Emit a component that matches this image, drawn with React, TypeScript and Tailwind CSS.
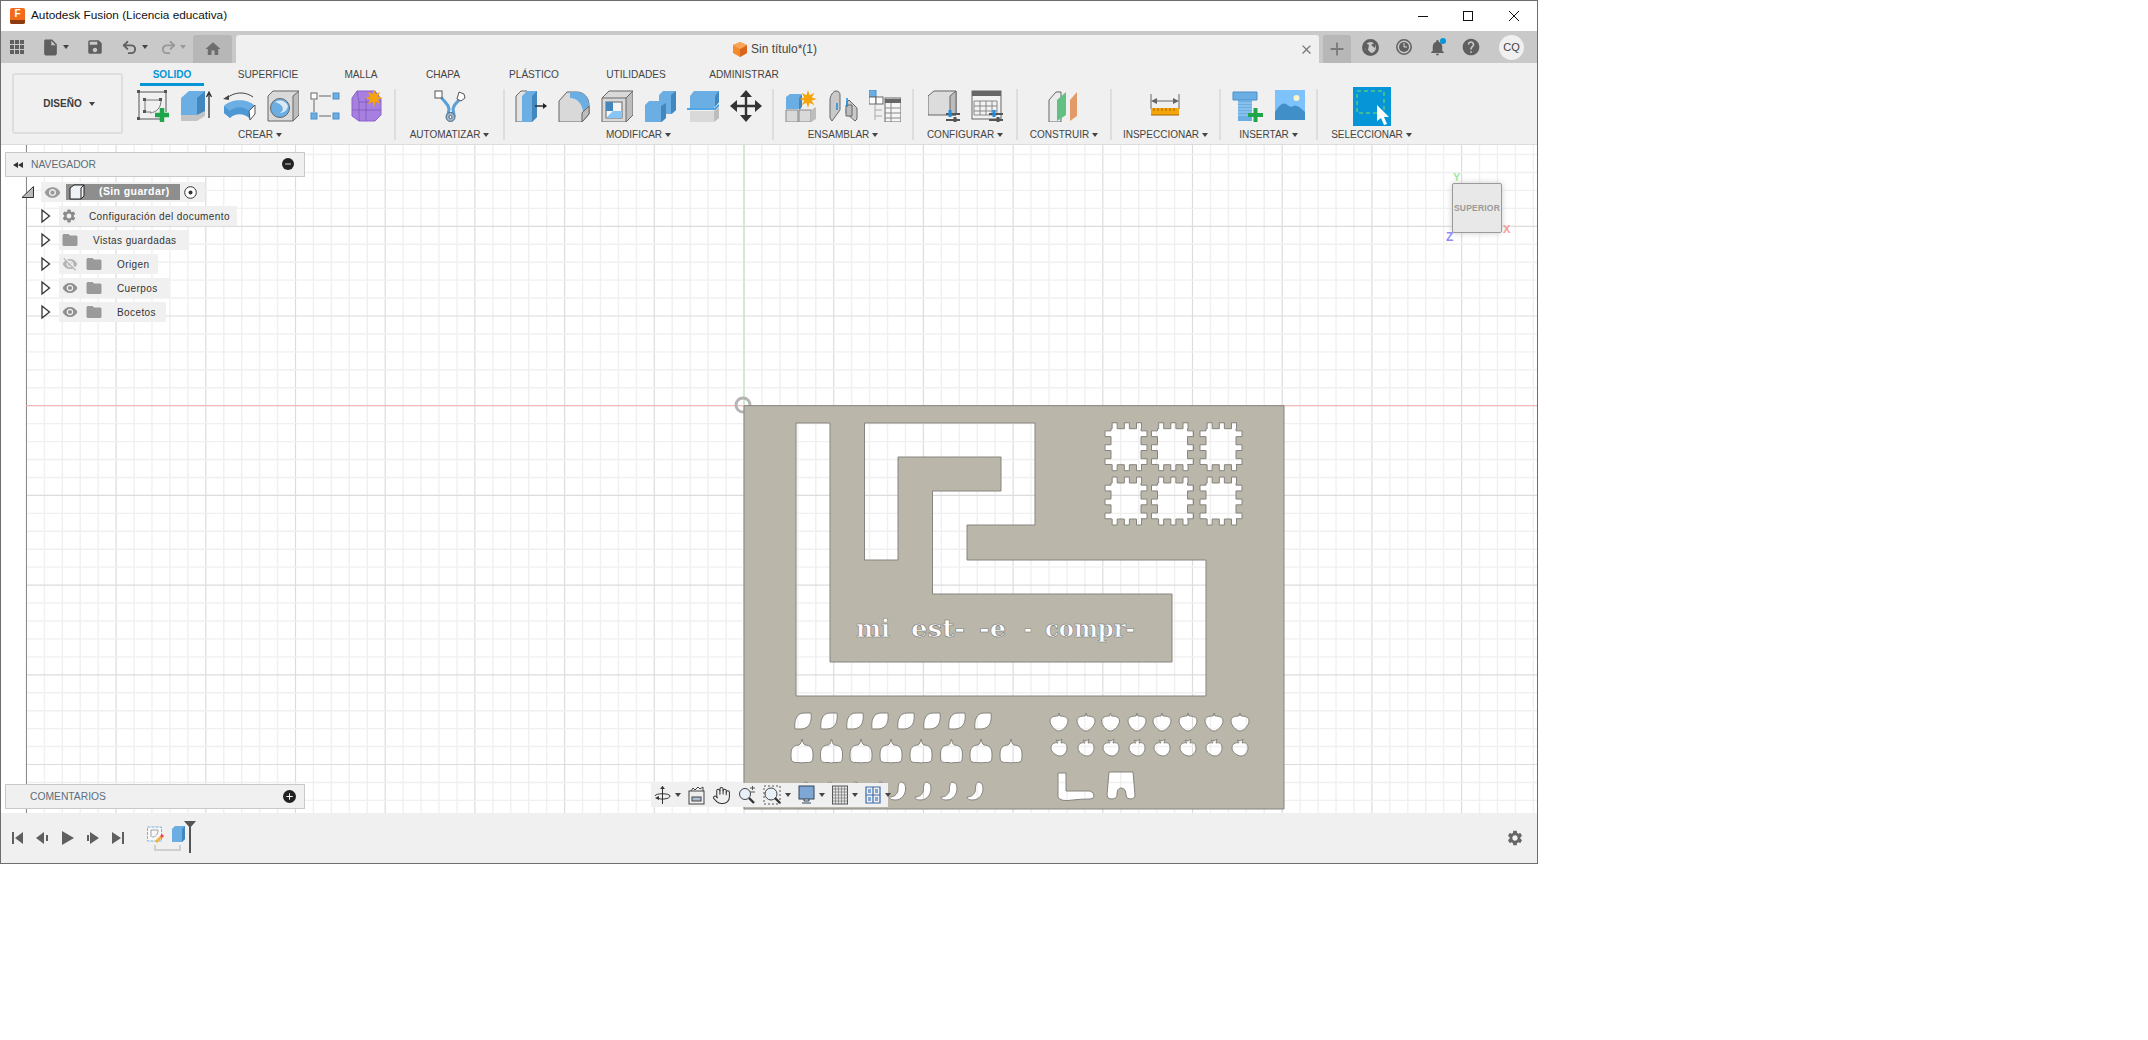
import { Hand, Redo2, Undo2 } from 'lucide-react';
import type { ReactNode } from 'react';
import {
  MdAdd,
  MdClose,
  MdFolder,
  MdHelp,
  MdHome,
  MdInsertDriveFile,
  MdNotifications,
  MdRemove,
  MdSave,
  MdSettings,
  MdVisibility,
  MdVisibilityOff,
} from 'react-icons/md';

const BLUE = '#6aaee4';
const DARK = '#4288bf';
const EDGE = '#666';

function Caret({ className = '' }: { className?: string }) {
  return <span className={`inline-block h-0 w-0 border-x-[3px] border-t-[4px] border-x-transparent border-t-[#444] ${className}`} />;
}

function Ico({ children, w = 32, h = 32 }: { children: ReactNode; w?: number; h?: number }) {
  return (
    <svg width={w} height={h} viewBox={`0 0 ${w} ${h}`} fill="none" className="shrink-0">
      {children}
    </svg>
  );
}

function SketchIcon() {
  return (
    <Ico>
      <path d="M2 2h27M2 2v27M2 29h21M29 2v20" stroke="#555" strokeWidth="1" />
      <path d="M8 10v12h6M8 10h16v1M24 10c0 8-4 12-11 13" stroke="#777" strokeWidth="1" />
      {[[0, 0], [27, 0], [0, 27], [6, 8], [22, 8], [6, 20]].map(([x, y]) => (
        <rect key={`${x}${y}`} x={x} y={y} width="3" height="3" fill="#555" />
      ))}
      <path d="M18 25h14M25 18v14" stroke="#1fa64a" strokeWidth="4.5" />
    </Ico>
  );
}

function ExtrudeIcon() {
  return (
    <Ico>
      <path d="M1 8l8-7h16v22l-8 7H1z" fill={BLUE} />
      <path d="M17 8l8-7v22l-8 4z" fill={DARK} />
      <path d="M1 25h16l8-4v5l-8 5H1z" fill="#c4c4c4" />
      <path d="M29 28V4M26.5 7L29 2l2.5 5" stroke="#222" strokeWidth="1.2" />
    </Ico>
  );
}

function RevolveIcon() {
  return (
    <Ico w={33}>
      <path d="M1 16C8 9 24 8 32 16L27 29C22 22 12 22 7 28L1 23Z" fill={BLUE} />
      <path d="M1 16L7 21C12 16 21 16 26 21L27 29C22 23 12 23 7 28L1 23Z" fill="#4d98d4" />
      <path d="M26 21L32 15V24L27 30Z" fill="#fff" stroke="#555" />
      <path d="M4 8C11 2 22 1 30 7" stroke="#444" />
      <path d="M0 9l6-4v5z" fill="#444" />
    </Ico>
  );
}

function HoleIcon() {
  return (
    <Ico>
      <path d="M1 6l5-5h26v24l-6 6H1z" fill="#d9d9d9" stroke={EDGE} />
      <path d="M26 31V6l6-5v24z" fill="#bdbdbd" stroke={EDGE} />
      <circle cx="13" cy="18" r="9.5" fill={BLUE} stroke={EDGE} />
      <path d="M8 12c5-3 11-1 13 4-1 5-5 7-8 7 4-2 5-8-5-11z" fill="#d9e9f6" />
    </Ico>
  );
}

function NodesIcon() {
  return (
    <Ico w={30}>
      <rect x="1" y="3" width="6" height="6" fill="#fff" stroke={EDGE} />
      <rect x="23" y="3" width="6" height="6" fill={BLUE} stroke="#4a8fc7" />
      <rect x="1" y="23" width="6" height="6" fill={BLUE} stroke="#4a8fc7" />
      <rect x="23" y="23" width="6" height="6" fill={BLUE} stroke="#4a8fc7" />
      <path d="M9 6h12M9 26h12M4 10v12" stroke={EDGE} />
    </Ico>
  );
}

function Star({ x, y, r = 8, color = '#f5a40a' }: { x: number; y: number; r?: number; color?: string }) {
  const pts = Array.from({ length: 16 }, (_, i) => {
    const a = (i / 16) * Math.PI * 2;
    const d = i % 2 ? r * 0.45 : r;
    return `${x + Math.cos(a) * d},${y + Math.sin(a) * d}`;
  }).join(' ');
  return <polygon points={pts} fill={color} />;
}

function FormIcon() {
  return (
    <Ico>
      <path d="M6 1h18l6 8v16l-6 6H8l-7-5V8z" fill="#a77fe0" stroke="#8d63cf" />
      <path d="M8 12h22M1 20h29M15 8v23M6 1l2 11v19" stroke="#7f59bb" strokeWidth=".8" />
      <Star x={23} y={8} r={9} />
    </Ico>
  );
}

function AutomateIcon() {
  return (
    <Ico>
      <path d="M7 7c4 6 7 6 8 12l-1 6h6l-1-6c1-6 5-6 8-12" stroke="#5a9fd6" strokeWidth="3" />
      <rect x="1" y="1" width="7" height="7" fill="#fff" stroke="#555" />
      <path d="M25 2l5 2 1 4-4 3-4-2z" fill="#fff" stroke="#555" />
      <circle cx="16.5" cy="27" r="4.5" fill="#9fb4c6" stroke="#4b6b85" />
      <circle cx="16.5" cy="27" r="1.5" fill="#fff" stroke="#4b6b85" />
    </Ico>
  );
}

function PressPullIcon() {
  return (
    <Ico>
      <path d="M1 6l5-5h6v31H1z" fill="#e3e3e3" stroke={EDGE} />
      <path d="M7 6l5-5h10v26l-5 5H7z" fill={BLUE} />
      <path d="M17 6l5-5v26l-5 5z" fill={DARK} />
      <path d="M20 16h11" stroke="#222" strokeWidth="1.4" />
      <path d="M28 13l4 3-4 3z" fill="#222" />
    </Ico>
  );
}

function FilletIcon() {
  return (
    <Ico>
      <path d="M1 11l8-9h10c7 0 12 6 12 13v9l-7 8H1z" fill="#d9d9d9" stroke={EDGE} />
      <path d="M12 2h7c7 0 12 6 12 13v3l-6 5c0-9-6-15-13-15z" fill={BLUE} />
      <path d="M24 32v-9l7-7v8z" fill="#bdbdbd" stroke={EDGE} />
    </Ico>
  );
}

function ShellIcon() {
  return (
    <Ico>
      <path d="M1 8l7-7h24v24l-7 7H1z" fill="#d9d9d9" stroke={EDGE} />
      <path d="M25 32V8l7-7v24z" fill="#bdbdbd" stroke={EDGE} />
      <path d="M1 8h24" stroke={EDGE} />
      <rect x="5" y="12" width="16" height="16" fill="#f5f5f5" stroke={EDGE} />
      <path d="M5 12h7v9h-7z" fill={DARK} />
      <path d="M12 21h9v7H5z" fill="#86c5f7" />
    </Ico>
  );
}

function CombineIcon() {
  return (
    <Ico>
      <path d="M1 15l4-4h10V5l4-4h13v19l-4 4h-6v4l-4 4H1z" fill={BLUE} />
      <path d="M27 5l5-4v19l-5 4zM17 16l5-3v15l-5 4z" fill={DARK} />
    </Ico>
  );
}

function SplitIcon() {
  return (
    <Ico>
      <path d="M3 6l4-5h25v11l-5 6H3z" fill={BLUE} />
      <path d="M28 6l4-5v11l-4 5z" fill={DARK} />
      <path d="M3 21h24l5-4v11l-5 4H3z" fill="#d9d9d9" />
      <path d="M27 32V21l5-4v11z" fill="#bdbdbd" />
      <path d="M0 19h28l5-5" stroke="#1d8fe0" strokeWidth="1.5" />
    </Ico>
  );
}

function MoveIcon() {
  return (
    <Ico>
      <path d="M16 5v22M5 16h22" stroke="#333" strokeWidth="2.4" />
      <path d="M16 0l6 7H10zM16 32l6-7H10zM0 16l7-6v12zM32 16l-7-6v12z" fill="#333" />
    </Ico>
  );
}

function ComponentIcon() {
  return (
    <Ico>
      <path d="M1 20h12v12H1zM14 20h12v12H14z" fill="#d9d9d9" stroke="#888" />
      <path d="M26 32V20l5-3v12z" fill="#bdbdbd" />
      <path d="M1 7l4-3h11v15H1z" fill={BLUE} />
      <path d="M14 8l3-4v13l-3 3z" fill={DARK} />
      <Star x={23} y={9} r={9} />
    </Ico>
  );
}

function JointIcon() {
  return (
    <Ico w={30}>
      <path d="M2 10c0-4 3-9 6-9s4 2 4 4v15l-8 11-2-3z" fill="#c9c9c9" stroke={EDGE} />
      <path d="M19 12l2-2 8 8v11l-2 2-9-8z" fill="#c9c9c9" stroke={EDGE} />
      <path d="M18 15h6v11h-6z" fill="#bdbdbd" stroke={EDGE} />
      <path d="M9 13v7M19 8v9" stroke="#1d8fe0" strokeWidth="1.5" />
    </Ico>
  );
}

function TableTreeIcon() {
  return (
    <Ico>
      <rect x="0" y="0" width="7" height="7" fill={BLUE} stroke="#4a8fc7" />
      <rect x="0" y="7" width="7" height="7" fill="#fff" stroke={EDGE} />
      <rect x="7" y="7" width="7" height="7" fill="#fff" stroke={EDGE} />
      <path d="M6 14v16M6 20h7M6 26h7" stroke="#aaa" />
      <rect x="16" y="8" width="16" height="24" fill="#f5f5f5" stroke={EDGE} />
      <path d="M16 9h16v4H16z" fill="#666" />
      <path d="M16 18h16M16 23h16M16 28h16M22 13v19" stroke="#888" />
    </Ico>
  );
}

function ParamBoxIcon() {
  return (
    <Ico>
      <path d="M0 6l6-5h22v24H0z" fill="#dcdcdc" stroke={EDGE} />
      <path d="M22 25V6l6-5v24z" fill="#bcbcbc" stroke={EDGE} />
      <path d="M18 24h14M18 30h14" stroke="#555" strokeWidth="2" />
      <path d="M22 20v7" stroke="#1d8fe0" strokeWidth="3" />
      <path d="M27 27v5" stroke="#555" strokeWidth="3" />
    </Ico>
  );
}

function ParamTableIcon() {
  return (
    <Ico>
      <rect x="1" y="1" width="29" height="28" fill="#f2f2f2" stroke={EDGE} />
      <path d="M1 1h29v5H1z" fill="#666" />
      <path d="M3 11h23v14H3zM3 16h23M3 21h23M9 11v14M15 11v14M21 11v14" stroke="#888" />
      <path d="M18 24h14M18 30h14" stroke="#555" strokeWidth="2" />
      <path d="M23 20v7" stroke="#1d8fe0" strokeWidth="3" />
      <path d="M27 27v5" stroke="#555" strokeWidth="3" />
    </Ico>
  );
}

function PlanesIcon() {
  return (
    <Ico>
      <path d="M1 10l7-8h5v30H1z" fill="#ececec" stroke={EDGE} />
      <path d="M9 10l9-8v23l-9 6z" fill="#62c182" />
      <path d="M22 10l7-8v24l-7 5z" fill="#e39a69" />
    </Ico>
  );
}

function MeasureIcon() {
  return (
    <Ico>
      <path d="M1 4v15M29 4v15M4 11h22" stroke="#666" />
      <path d="M1 11l6-3v6zM29 11l-6-3v6z" fill="#666" />
      <rect x="1" y="18" width="28" height="7" fill="#f5a40a" />
      <path d="M4 18v3M8 18v3M12 18v3M16 18v3M20 18v3M24 18v3M1 25h28" stroke="#a36b00" />
    </Ico>
  );
}

function BoltIcon() {
  return (
    <Ico>
      <path d="M1 2h24v8H1z" fill="#6aaee4" stroke="#4a8fc7" />
      <path d="M6 10h14v21H6z" fill="#6aaee4" />
      <path d="M6 13h14M6 16h14M6 19h14M6 22h14M6 25h14" stroke="#a8d2f2" />
      <path d="M16 25h15M23.5 18v14" stroke="#1fa64a" strokeWidth="4" />
    </Ico>
  );
}

function ImageIcon() {
  return (
    <Ico w={30}>
      <rect width="30" height="30" fill="#7ec2fb" />
      <path d="M0 22c4-7 8-10 11-8 3 2 5 4 7 2 3-2 8 2 12 6v8H0z" fill="#408fc9" />
      <circle cx="21.5" cy="8" r="3" fill="#f8f4cf" />
    </Ico>
  );
}

function SelectIcon() {
  return (
    <Ico w={38} h={39}>
      <rect width="38" height="39" fill="#0696d7" />
      <rect x="4" y="4" width="27" height="22" stroke="#7ee05f" strokeDasharray="4 3" />
      <path d="M24 18v16l4-3 3 7 3-1-3-7h5z" fill="#fff" />
    </Ico>
  );
}

function NavIcon({ kind }: { kind: string }) {
  if (kind === 'orbit')
    return (
      <Ico w={17} h={20}>
        <path d="M8.5 1v18M1 11c0-3 15-3 15 0s-9 4-13 2" stroke="#333" />
        <path d="M6 4l2.5-3L11 4M1 13l4-2v4z" fill="#333" />
      </Ico>
    );
  if (kind === 'capture')
    return (
      <Ico w={17} h={20}>
        <rect x="1" y="6" width="15" height="13" fill="#eee" stroke="#444" />
        <rect x="4" y="12" width="9" height="4" fill="#a9bcd1" stroke="#444" />
        <path d="M3 6l2-3 2 2 3-3 2 2 3-2v4" stroke="#444" />
      </Ico>
    );
  if (kind === 'zoom')
    return (
      <Ico w={18} h={20}>
        <circle cx="7" cy="9" r="5.5" fill="#e7f0f9" stroke="#444" />
        <path d="M11 13l5 5" stroke="#333" strokeWidth="2.4" />
        <path d="M12 3h5M14.5 1v4M12 7h5" stroke="#555" />
      </Ico>
    );
  if (kind === 'fit')
    return (
      <Ico w={18} h={20}>
        <path d="M1 1h16v18H1z" stroke="#555" strokeDasharray="2 2" />
        <circle cx="8" cy="9" r="6" fill="#e7f0f9" stroke="#444" />
        <path d="M12 13l5 5" stroke="#333" strokeWidth="2.4" />
      </Ico>
    );
  if (kind === 'display')
    return (
      <Ico w={17} h={20}>
        <rect x="1" y="1" width="15" height="13" fill="#7fa7d6" stroke="#345" />
        <path d="M6 14v2h5v-2M4 18h9" stroke="#345" />
      </Ico>
    );
  if (kind === 'grid')
    return (
      <Ico w={16} h={20}>
        <rect x=".5" y="1" width="15" height="18" fill="#e4e4e4" stroke="#555" />
        <path d="M3.5 1v18M6.5 1v18M9.5 1v18M12.5 1v18M.5 4h15M.5 7h15M.5 10h15M.5 13h15M.5 16h15" stroke="#777" strokeWidth=".7" />
      </Ico>
    );
  return (
    <Ico w={16} h={18}>
      <path d="M1 1h14v16H1zM1 9h14M8 1v16" stroke="#3c6aa8" strokeWidth="1.2" />
      <path d="M3 3h3v4H3zM10 3h3v4h-3zM3 11h3v4H3zM10 11h3v4h-3z" fill="#7fa7d6" />
    </Ico>
  );
}

const groups: { label: string; width: string; icons: ReactNode[] }[] = [
  { label: 'CREAR', width: 'w-[270px]', icons: [<SketchIcon key="a" />, <ExtrudeIcon key="b" />, <RevolveIcon key="c" />, <HoleIcon key="d" />, <NodesIcon key="e" />, <FormIcon key="f" />] },
  { label: 'AUTOMATIZAR', width: 'w-[109px]', icons: [<AutomateIcon key="a" />] },
  { label: 'MODIFICAR', width: 'w-[269px]', icons: [<PressPullIcon key="a" />, <FilletIcon key="b" />, <ShellIcon key="c" />, <CombineIcon key="d" />, <SplitIcon key="e" />, <MoveIcon key="f" />] },
  { label: 'ENSAMBLAR', width: 'w-[140px]', icons: [<ComponentIcon key="a" />, <JointIcon key="b" />, <TableTreeIcon key="c" />] },
  { label: 'CONFIGURAR', width: 'w-[104px]', icons: [<ParamBoxIcon key="a" />, <ParamTableIcon key="b" />] },
  { label: 'CONSTRUIR', width: 'w-[94px]', icons: [<PlanesIcon key="a" />] },
  { label: 'INSPECCIONAR', width: 'w-[109px]', icons: [<MeasureIcon key="a" />] },
  { label: 'INSERTAR', width: 'w-[97px]', icons: [<BoltIcon key="a" />, <ImageIcon key="b" />] },
  { label: 'SELECCIONAR', width: 'w-[107px]', icons: [<SelectIcon key="a" />] },
];

const tabs = [
  { label: 'SOLIDO', width: 'w-[92px]' },
  { label: 'SUPERFICIE', width: 'w-[100px]' },
  { label: 'MALLA', width: 'w-[86px]' },
  { label: 'CHAPA', width: 'w-[78px]' },
  { label: 'PLÁSTICO', width: 'w-[104px]' },
  { label: 'UTILIDADES', width: 'w-[100px]' },
  { label: 'ADMINISTRAR', width: 'w-[116px]' },
];

function TitleBar() {
  return (
    <div className="flex h-[30px] shrink-0 items-center bg-white">
      <div className="ml-[9px] flex h-[16px] w-[15px] flex-col items-center overflow-hidden rounded-[2px] bg-[#f26a1b]">
        <span className="text-[10px] leading-[12px] font-bold text-white">F</span>
        <span className="h-[4px] w-full bg-[#8c3b10]" />
      </div>
      <span className="ml-[6px] text-[11.8px] text-[#111]">Autodesk Fusion (Licencia educativa)</span>
      <div className="ml-auto flex items-center text-[#111]">
        <span className="mr-[35px] h-px w-[10px] bg-[#111]" />
        <span className="mr-[36px] h-[10px] w-[10px] border border-[#111]" />
        <svg width="10" height="10" viewBox="0 0 10 10" className="mr-[18px]">
          <path d="M0 0l10 10M10 0L0 10" stroke="#111" />
        </svg>
      </div>
    </div>
  );
}

function QuickBar() {
  return (
    <div className="flex h-[32px] shrink-0 items-center bg-[#c9c9c9] text-[#5f5f5f]">
      <div className="ml-[9px] grid h-[14px] w-[14px] grid-cols-3 gap-px">
        {Array.from({ length: 9 }, (_, i) => (
          <span key={i} className="bg-[#5f5f5f]" />
        ))}
      </div>
      <MdInsertDriveFile className="ml-[17px] shrink-0" size={19} />
      <Caret className="ml-[3px] border-t-[#5f5f5f]" />
      <MdSave className="ml-[17px] shrink-0" size={18} />
      <Undo2 className="ml-[17px] shrink-0" size={17} strokeWidth={2.6} />
      <Caret className="ml-[4px] border-t-[#5f5f5f]" />
      <Redo2 className="ml-[12px] shrink-0 text-[#989898]" size={17} strokeWidth={2.6} />
      <Caret className="ml-[3px] border-t-[#989898]" />
      <div className="ml-[7px] flex h-[28px] w-[39px] items-center justify-center self-end rounded-t-[3px] bg-[#b7b7b7] text-[#6e6e6e]">
        <MdHome size={18} />
      </div>
      <div className="ml-[4px] flex h-[28px] w-[1083px] items-center self-end rounded-t-[3px] bg-[#f0f0f0]">
        <div className="flex-1" />
        <svg width="14" height="15" viewBox="0 0 14 15">
          <path d="M7 0l7 3v8l-7 4-7-4V3z" fill="#f58a2c" />
          <path d="M7 7l7-4v8l-7 4z" fill="#d9661a" />
          <path d="M7 0l7 3-7 4-7-4z" fill="#f9a65a" />
        </svg>
        <span className="ml-[4px] text-[12px] text-[#444]">Sin título*(1)</span>
        <div className="flex flex-1 justify-end pr-[5px] text-[#777]">
          <MdClose size={15} />
        </div>
      </div>
      <div className="ml-[4px] flex h-[28px] w-[28px] items-center justify-center self-end rounded-t-[3px] bg-[#b7b7b7] text-[#7a7a7a]">
        <MdAdd size={22} />
      </div>
      <svg width="17" height="17" viewBox="0 0 17 17" className="ml-[11px] shrink-0">
        <circle cx="8.5" cy="8.5" r="7" fill="none" stroke="#5f5f5f" strokeWidth="3" />
        <path d="M2 3l5 3-1 5 4 4-6-1zM9 6l5-3-1 6z" fill="#5f5f5f" />
      </svg>
      <svg width="16" height="16" viewBox="0 0 16 16" className="ml-[17px] shrink-0">
        <circle cx="8" cy="8" r="7.2" fill="none" stroke="#5f5f5f" strokeWidth="1.5" />
        <circle cx="8" cy="8" r="5" fill="#5f5f5f" />
        <path d="M8 4v4h3" fill="none" stroke="#ddd" />
      </svg>
      <div className="relative ml-[16px]">
        <MdNotifications size={19} />
        <span className="absolute top-0 right-[1px] h-[6px] w-[6px] rounded-full bg-[#0696d7]" />
      </div>
      <MdHelp className="ml-[14px] shrink-0" size={20} />
      <div className="ml-[18px] flex h-[25px] w-[25px] items-center justify-center rounded-full bg-[#f0f0f0] text-[11px] text-[#444]">CQ</div>
    </div>
  );
}

function Ribbon() {
  return (
    <div className="flex h-[82px] shrink-0 border-b border-[#dcdcdc] bg-[#f0f0f0]">
      <div className="mt-[10px] ml-[11px] flex h-[61px] w-[111px] items-center justify-center gap-[7px] rounded-[3px] border-2 border-[#dedede] pl-[3px] text-[10px] font-bold text-[#3c3c3c]">
        DISEÑO <Caret />
      </div>
      <div className="ml-[3px] flex flex-col">
        <div className="flex h-[24px]">
          {tabs.map((t, i) => (
            <div key={t.label} className={`relative flex items-center justify-center text-[10.1px] ${t.width} ${i === 0 ? 'font-bold text-[#0696d7]' : 'text-[#444]'}`}>
              {t.label}
              {i === 0 && <span className="absolute top-[20px] left-[14px] h-[3px] w-[64px] bg-[#0696d7]" />}
            </div>
          ))}
        </div>
        <div className="mt-[2px] flex h-[51px]">
          {groups.map((g, i) => (
            <div key={g.label} className={`flex flex-col items-center pt-px ${g.width} ${i < groups.length - 1 ? 'border-r-2 border-[#dedede]' : ''}`}>
              <div className="flex h-[32px] items-center justify-center gap-[11px]">{g.icons}</div>
              <div className="mt-[5px] flex h-[16px] items-center gap-[3px] text-[10px] whitespace-nowrap text-[#444]">
                {g.label} <Caret />
              </div>
            </div>
          ))}
        </div>
      </div>
    </div>
  );
}

function puzzle(x: number, y: number, w = 42, h = 48) {
  const i = 6;
  const fr = [[0.17, 0.29], [0.46, 0.58], [0.75, 0.87]];
  let d = `M${x + i} ${y + i}`;
  fr.forEach(([a, b]) => { d += `L${x + w * a} ${y + i}L${x + w * a} ${y}L${x + w * b} ${y}L${x + w * b} ${y + i}`; });
  d += `L${x + w - i} ${y + i}`;
  fr.forEach(([a, b]) => { d += `L${x + w - i} ${y + h * a}L${x + w} ${y + h * a}L${x + w} ${y + h * b}L${x + w - i} ${y + h * b}`; });
  d += `L${x + w - i} ${y + h - i}`;
  [...fr].reverse().forEach(([a, b]) => { d += `L${x + w * b} ${y + h - i}L${x + w * b} ${y + h}L${x + w * a} ${y + h}L${x + w * a} ${y + h - i}`; });
  d += `L${x + i} ${y + h - i}`;
  [...fr].reverse().forEach(([a, b]) => { d += `L${x + i} ${y + h * b}L${x} ${y + h * b}L${x} ${y + h * a}L${x + i} ${y + h * a}`; });
  return d + 'Z';
}

const leaf = (x: number, y: number) => `M${x + 8} ${y - 8}c1 8 -1 15 -9 16l-7 0c-1 -8 1 -16 9 -16z`;
const pumpkin = (x: number, y: number) => `M${x} ${y - 12}c1 3 1 5 3 6c5 0 8 3 8 9c0 4 0 7 -2 8c-3 1 -6 0 -9 1c-3 -1 -6 0 -9 -1c-2 -1 -2 -4 -2 -8c0 -6 3 -9 8 -9c2 -1 2 -3 3 -6z`;
const berry = (x: number, y: number) => `M${x} ${y - 9}l1 3c4 0 8 1 8 5c0 4 -5 10 -9 10c-4 0 -9 -6 -9 -10c0 -4 4 -5 8 -5z`;
const apple = (x: number, y: number) => `M${x - 1} ${y - 5}l-2 -3l3 1l3 -2l-1 4c4 -1 6 1 6 5c0 4 -3 8 -7 8c-4 0 -9 -4 -9 -8c0 -4 3 -6 7 -5z`;
const banana = (x: number, y: number) => `M${x + 4} ${y - 9}c3 1 4 3 4 7c0 5 -4 11 -10 11c-4 0 -6 -1 -6 -3c3 0 6 -1 8 -5c1 -3 0 -6 1 -7c0 -2 1 -3 3 -3z`;

const holes = [
  'M796 423H830V662H1172V594H932.5V491H1001V457H898V560H864.5V423H1035V525H967V560H1206V696H796Z',
  ...[1105, 1151.5, 1200].flatMap((x) => [puzzle(x, 422.7), puzzle(x, 477)]),
  ...[803, 829, 855, 880, 906, 932, 957, 983].map((x) => leaf(x, 721)),
  ...[802, 831.5, 861, 891, 921, 951.4, 981, 1011].map((x) => pumpkin(x, 751)),
  ...[802, 826.5, 852, 877, 897.6, 923, 949, 975].map((x) => banana(x, 791)),
  ...[1059, 1086, 1110.5, 1137, 1162, 1188, 1214, 1240].map((x) => berry(x, 722)),
  ...[1059, 1086, 1111, 1137, 1162, 1188, 1214, 1240].map((x) => apple(x, 748)),
  'M1058 773L1066 773L1066 791L1090 791Q1094 792 1094 796Q1094 799 1090 799Q1080 799 1073 800Q1060 802 1058 797Z',
  'M1109 772L1133 772L1135 795Q1135 799 1130 799Q1126 799 1126 795Q1126 788 1121 788Q1117 788 1117 795Q1117 799 1111 799Q1107 799 1107 795Z',
].join('');

function Model() {
  const step = 89.7 / 5;
  const xs = Array.from({ length: 86 }, (_, i) => 26.4 + i * step);
  const ys = Array.from({ length: 39 }, (_, i) => 136.6 + i * step);
  return (
    <svg className="absolute inset-0" width="1536" height="668" viewBox="1 145 1536 668">
      {xs.map((x, i) => (
        <path key={x} d={`M${x} 144V813`} stroke={i % 5 ? '#f0f0f0' : '#dcdcdc'} strokeWidth={i % 5 ? 1.4 : 1.2} />
      ))}
      {ys.map((y, i) => (
        <path key={y} d={`M26 ${y}H1537`} stroke={i % 5 ? '#f0f0f0' : '#dcdcdc'} strokeWidth={i % 5 ? 1.4 : 1.2} />
      ))}
      <path d="M26.5 144V813" stroke="#8a8a8a" />
      <path d="M744 144V405" stroke="#b9eab9" />
      <path d="M26 405.7H1537" stroke="#f5b3b3" />
      <circle cx="743" cy="405" r="7" fill="none" stroke="#b5b5b5" strokeWidth="3" />
      <path
        d={`M744 405.7H1284V809H744Z${holes}`}
        fill="#bab6aa"
        fillRule="evenodd"
        stroke="#85847f"
        strokeWidth="1"
        strokeLinejoin="round"
      />
      <g fontFamily="'DejaVu Serif', serif" fontWeight="700" fontSize="24" fill="#fff" stroke="#777" strokeWidth=".6">
        <text x="856" y="637" textLength="34" lengthAdjust="spacingAndGlyphs">mi</text>
        <text x="911" y="637" textLength="54" lengthAdjust="spacingAndGlyphs">est-</text>
        <text x="979" y="637" textLength="27" lengthAdjust="spacingAndGlyphs">-e</text>
        <text x="1024" y="637" textLength="8" lengthAdjust="spacingAndGlyphs">-</text>
        <text x="1045" y="637" textLength="90" lengthAdjust="spacingAndGlyphs">compr-</text>
      </g>
    </svg>
  );
}

function Panel({ title, icon, className }: { title: string; icon: ReactNode; className: string }) {
  return (
    <div className={`flex w-[300px] items-center border border-[#c9c9c9] bg-[#f0f0f0] text-[10.3px] text-[#5d6d7b] ${className}`}>
      {icon}
      <span>{title}</span>
    </div>
  );
}

function Expander() {
  return (
    <svg width="10" height="14" viewBox="0 0 10 14" className="ml-[36px] shrink-0">
      <path d="M1 1l7.5 6L1 13z" fill="#fff" stroke="#333" strokeWidth="1.3" />
    </svg>
  );
}

const rows = [
  { name: 'Configuración del documento', w: 'w-[178px]', pad: 'ml-[12px]', kind: 'gear' },
  { name: 'Vistas guardadas', w: 'w-[130px]', pad: 'ml-[14px]', kind: 'folder' },
  { name: 'Origen', w: 'w-[99px]', pad: 'ml-[14px]', kind: 'hidden' },
  { name: 'Cuerpos', w: 'w-[111px]', pad: 'ml-[14px]', kind: 'eye' },
  { name: 'Bocetos', w: 'w-[107px]', pad: 'ml-[14px]', kind: 'eye' },
];

function Browser() {
  return (
    <div className="absolute top-[7px] left-[4px] w-[300px] font-['Liberation_Sans',sans-serif]">
      <Panel
        title="NAVEGADOR"
        className="h-[25px]"
        icon={
          <span className="mr-[6px] ml-[5px] flex w-[14px] items-center justify-center">
            <svg width="10" height="6" viewBox="0 0 10 6"><path d="M5 0v6L0 3zM10 0v6L5 3z" fill="#333" /></svg>
          </span>
        }
      />
      <span className="absolute top-[6px] right-[11px] flex h-[12px] w-[12px] items-center justify-center rounded-full bg-[#222] text-white">
        <MdRemove size={10} />
      </span>
      <div className="mt-[5px] flex h-[20px] items-center">
        <svg width="12" height="12" viewBox="0 0 12 12" className="ml-[17px] shrink-0">
          <path d="M0 11.5L11.5 .5v11z" fill="#bbb" stroke="#333" />
        </svg>
        <div className="ml-[7px] flex h-[20px] w-[164px] items-center bg-[#f0f0f0]">
          <MdVisibility size={17} className="ml-[3px] shrink-0 text-[#9a9a9a]" />
          <div className="ml-[5px] flex h-[16px] w-[114px] items-center bg-[#8e8e8e]">
            <svg width="17" height="16" viewBox="0 0 17 16" className="ml-[3px] shrink-0">
              <path d="M1 4l4-3h10v11l-3 3H1z" fill="#eef1f6" stroke="#222" />
              <path d="M12 15V4l3-3" stroke="#222" fill="none" />
            </svg>
            <span className="ml-[13px] text-[10.5px] font-bold tracking-[.4px] text-white">(Sin guardar)</span>
          </div>
          <svg width="13" height="13" viewBox="0 0 13 13" className="ml-[4px] shrink-0">
            <circle cx="6.5" cy="6.5" r="5.8" fill="#fff" stroke="#333" />
            <circle cx="6.5" cy="6.5" r="2" fill="#333" />
          </svg>
        </div>
      </div>
      <div className="mt-[4px] flex flex-col gap-[4px]">
        {rows.map((r) => (
          <div key={r.name} className="flex h-[20px] items-center">
            <Expander />
            <div className={`ml-[8px] flex h-[20px] items-center bg-[#f0f0f0] text-[10px] tracking-[.4px] whitespace-nowrap text-[#333] ${r.w}`}>
              {r.kind === 'gear' && <MdSettings size={16} className="ml-[2px] shrink-0 text-[#8a8a8a]" />}
              {r.kind === 'hidden' && <MdVisibilityOff size={16} className="ml-[3px] shrink-0 text-[#b5b5b5]" />}
              {r.kind === 'eye' && <MdVisibility size={16} className="ml-[3px] shrink-0 text-[#8f8f8f]" />}
              {r.kind !== 'gear' && <MdFolder size={18} className={`${r.kind === 'folder' ? 'ml-[2px]' : 'ml-[7px]'} shrink-0 text-[#9a9a9a]`} />}
              <span className={r.pad}>{r.name}</span>
            </div>
          </div>
        ))}
      </div>
    </div>
  );
}

function NavBar() {
  const items: [string, boolean][] = [['orbit', true], ['capture', false], ['hand', false], ['zoom', false], ['fit', true], ['display', true], ['grid', true], ['views', true]];
  return (
    <div className="absolute top-[638px] left-[650px] flex h-[24px] w-[237px] items-center gap-[7px] bg-[#f0f0f0] pl-[3px]">
      {items.map(([k, caret]) => (
        <div key={k} className="flex items-center gap-[4px]">
          {k === 'hand' ? <Hand size={19} strokeWidth={1.3} className="text-[#333]" /> : <NavIcon kind={k} />}
          {caret && <Caret className="border-x-[2.5px] border-t-[3px]" />}
        </div>
      ))}
    </div>
  );
}

function ViewCube() {
  return (
    <div className="absolute top-[38px] left-[1451px] h-[50px] w-[50px] rounded-[2px] border border-[#9a9a9a] bg-[#e8e8e8] shadow-[0_0_6px_#ccc]">
      <div className="flex h-full items-center justify-center text-[8.5px] font-bold tracking-[.2px] text-[#9a9a9a]">SUPERIOR</div>
      <span className="absolute -top-[15px] left-[0px] text-[11px] font-bold text-[#9fe79f]">Y</span>
      <span className="absolute top-[37px] left-[50px] text-[11px] font-bold text-[#f59a9a]">X</span>
      <span className="absolute top-[44px] -left-[7px] text-[12px] font-bold text-[#8d8df2]">Z</span>
    </div>
  );
}

function Timeline() {
  return (
    <div className="flex h-[50px] shrink-0 items-center bg-[#f0f0f0]">
      <svg width="112" height="14" viewBox="0 0 112 14" className="ml-[11px] shrink-0">
        <g fill="#5f5f5f">
          <path d="M0 1h2v12H0zM11 1v12L3 7z" />
          <path d="M24 7l8-6v12zM34 4h2v6h-2z" />
          <path d="M50 0l12 7-12 7z" />
          <path d="M75 4h2v6h-2zM78 1l9 6-9 6z" />
          <path d="M100 1l9 6-9 6zM110 1h2v12h-2z" />
        </g>
      </svg>
      <svg width="52" height="36" viewBox="0 0 52 36" className="ml-[23px] mt-[2px] shrink-0">
        <rect x=".5" y="6" width="14" height="14" fill="#f7f7f7" stroke="#79b3df" strokeDasharray="3 1" />
        <path d="M4 9h7M4 9v7M11 9c0 4-2 7-6 7" stroke="#8f8f8f" fill="none" strokeWidth=".8" />
        <path d="M8 20l5-5 2 2-5 5z" fill="#f2b33d" />
        <path d="M13 15l2-2 2 2-2 2z" fill="#e44" />
        <path d="M25 8l3-3h10v13l-3 3H25z" fill={BLUE} />
        <path d="M35 8l3-3v13l-3 3z" fill={DARK} />
        <path d="M8 24v5h25v-5" stroke="#cfcfcf" strokeWidth="2" fill="none" />
        <path d="M37 0h12l-6 7z" fill="#555" />
        <path d="M43 5v27" stroke="#555" strokeWidth="2" />
      </svg>
      <MdSettings size={18} className="mr-[13px] ml-auto text-[#666]" />
    </div>
  );
}

export default function App() {
  return (
    <div className="h-[1040px] w-[2148px] bg-white font-['Liberation_Sans',sans-serif]">
      <div className="flex h-[864px] w-[1538px] flex-col border border-[#6e6e6e]">
        <TitleBar />
        <QuickBar />
        <Ribbon />
        <div className="relative flex-1 overflow-hidden bg-white">
          <Model />
          <Browser />
          <Panel
            title="COMENTARIOS"
            className="absolute top-[639px] left-[4px] h-[25px] pl-[24px]"
            icon={null}
          />
          <span className="absolute top-[645px] left-[282px] flex h-[13px] w-[13px] items-center justify-center rounded-full bg-[#222] text-white">
            <MdAdd size={11} />
          </span>
          <NavBar />
          <ViewCube />
        </div>
        <Timeline />
      </div>
    </div>
  );
}
